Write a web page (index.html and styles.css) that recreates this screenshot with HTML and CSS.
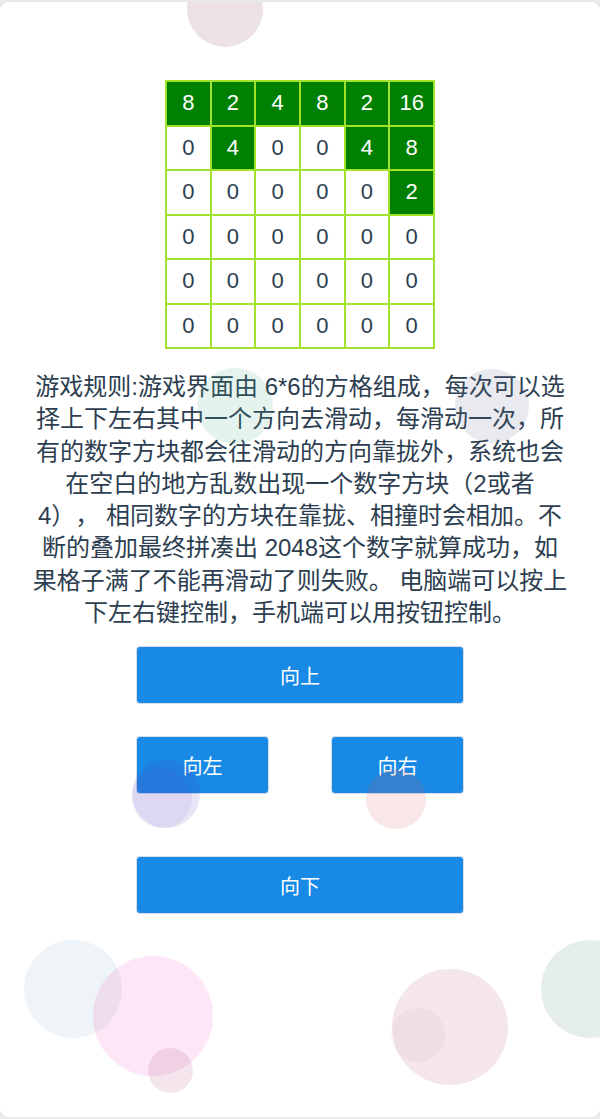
FILE: index.html
```html
<!DOCTYPE html>
<html lang="zh-CN">
<head>
<meta charset="utf-8">
<title>2048</title>
<link rel="stylesheet" href="styles.css">
</head>
<body>
<div class="card">
  <div class="board">
    <div class="cell on">8</div><div class="cell on">2</div><div class="cell on">4</div><div class="cell on">8</div><div class="cell on">2</div><div class="cell on">16</div>
    <div class="cell">0</div><div class="cell on">4</div><div class="cell">0</div><div class="cell">0</div><div class="cell on">4</div><div class="cell on">8</div>
    <div class="cell">0</div><div class="cell">0</div><div class="cell">0</div><div class="cell">0</div><div class="cell">0</div><div class="cell on">2</div>
    <div class="cell">0</div><div class="cell">0</div><div class="cell">0</div><div class="cell">0</div><div class="cell">0</div><div class="cell">0</div>
    <div class="cell">0</div><div class="cell">0</div><div class="cell">0</div><div class="cell">0</div><div class="cell">0</div><div class="cell">0</div>
    <div class="cell">0</div><div class="cell">0</div><div class="cell">0</div><div class="cell">0</div><div class="cell">0</div><div class="cell">0</div>
  </div>
  <p class="rules">游戏规则:游戏界面由 6*6的方格组成，每次可以选择上下左右其中一个方向去滑动，每滑动一次，所有的数字方块都会往滑动的方向靠拢外，系统也会在空白的地方乱数出现一个数字方块（2或者4），&nbsp;相同数字的方块在靠拢、相撞时会相加。不断的叠加最终拼凑出 2048这个数字就算成功，如果格子满了不能再滑动了则失败。 电脑端可以按上下左右键控制，手机端可以用按钮控制。</p>
  <div class="controls">
    <button class="btn wide">向上</button>
    <div class="row">
      <button class="btn half">向左</button>
      <button class="btn half">向右</button>
    </div>
    <button class="btn wide">向下</button>
  </div>
  <div class="bubbles">
    <span class="bubble b1"></span>
    <span class="bubble b2"></span>
    <span class="bubble b3"></span>
    <span class="bubble b4"></span>
    <span class="bubble b4b"></span>
    <span class="bubble b5"></span>
    <span class="bubble b6"></span>
    <span class="bubble b7"></span>
    <span class="bubble b8"></span>
    <span class="bubble b9"></span>
    <span class="bubble b10"></span>
    <span class="bubble b11"></span>
  </div>
</div>
</body>
</html>
```

FILE: styles.css
```css
html, body {
  margin: 0;
  padding: 0;
}
body {
  background: #ececec;
  font-family: "Liberation Sans", "Noto Sans CJK SC", sans-serif;
  color: #2c3e50;
}
.card {
  position: relative;
  overflow: hidden;
  margin-top: 2px;
  height: 1115px;
  background: #fff;
  border-radius: 8px;
  box-shadow: 0 0 2px rgba(0,0,0,0.12);
  padding-top: 78px;
  box-sizing: border-box;
}
.board {
  width: 270px;
  height: 269px;
  margin: 0 auto;
  display: grid;
  grid-template-columns: repeat(6, 1fr);
  grid-template-rows: repeat(6, 1fr);
  gap: 2px;
  padding: 2px;
  box-sizing: border-box;
  background: #a2e22c;
}
.cell {
  background: #fff;
  display: flex;
  align-items: center;
  justify-content: center;
  font-size: 22px;
  color: #2c3e50;
}
.cell.on {
  background: #008000;
  color: #fff;
}
.rules {
  margin: 22px auto 0;
  width: 537px;
  font-size: 24px;
  line-height: 32.3px;
  text-align: center;
  text-spacing-trim: space-all;
}
.controls {
  width: 328px;
  margin: 17px auto 0;
  display: flex;
  flex-direction: column;
}
.row {
  display: flex;
  justify-content: space-between;
  margin: 32px 0 62px;
}
.btn {
  height: 58px;
  border: 1px solid #d6dde6;
  border-radius: 4px;
  background: #1989e6;
  color: #fff;
  font-family: "Noto Sans CJK SC", sans-serif;
  font-size: 20px;
  padding: 0;
}
.wide { width: 328px; }
.half { width: 133px; }
.bubbles {
  position: absolute;
  inset: 0;
  pointer-events: none;
}
.bubble {
  position: absolute;
  border-radius: 50%;
}
.b1 { left: 187px; top: -31px; width: 76px; height: 76px; background: rgba(135,75,108,0.17); }
.b2 { left: 197px; top: 366px; width: 76px; height: 76px; background: rgba(82,175,142,0.15); }
.b3 { left: 455px; top: 367px; width: 74px; height: 74px; background: rgba(108,115,148,0.15); }
.b4 { left: 132px; top: 758px; width: 68px; height: 68px; background: rgba(85,55,190,0.13); }
.b4b { left: 132px; top: 766px; width: 60px; height: 60px; background: rgba(85,55,190,0.08); }
.b5 { left: 366px; top: 767px; width: 60px; height: 60px; background: rgba(215,88,88,0.15); }
.b6 { left: 24px; top: 938px; width: 98px; height: 98px; background: rgba(142,182,202,0.15); }
.b7 { left: 93px; top: 954px; width: 120px; height: 120px; background: rgba(242,88,195,0.15); }
.b8 { left: 148px; top: 1046px; width: 45px; height: 45px; background: rgba(182,88,128,0.15); }
.b9 { left: 392px; top: 967px; width: 116px; height: 116px; background: rgba(182,88,128,0.15); }
.b10 { left: 391px; top: 1006px; width: 54px; height: 54px; background: rgba(182,110,150,0.06); }
.b11 { left: 541px; top: 938px; width: 98px; height: 98px; background: rgba(88,142,128,0.15); }
```
